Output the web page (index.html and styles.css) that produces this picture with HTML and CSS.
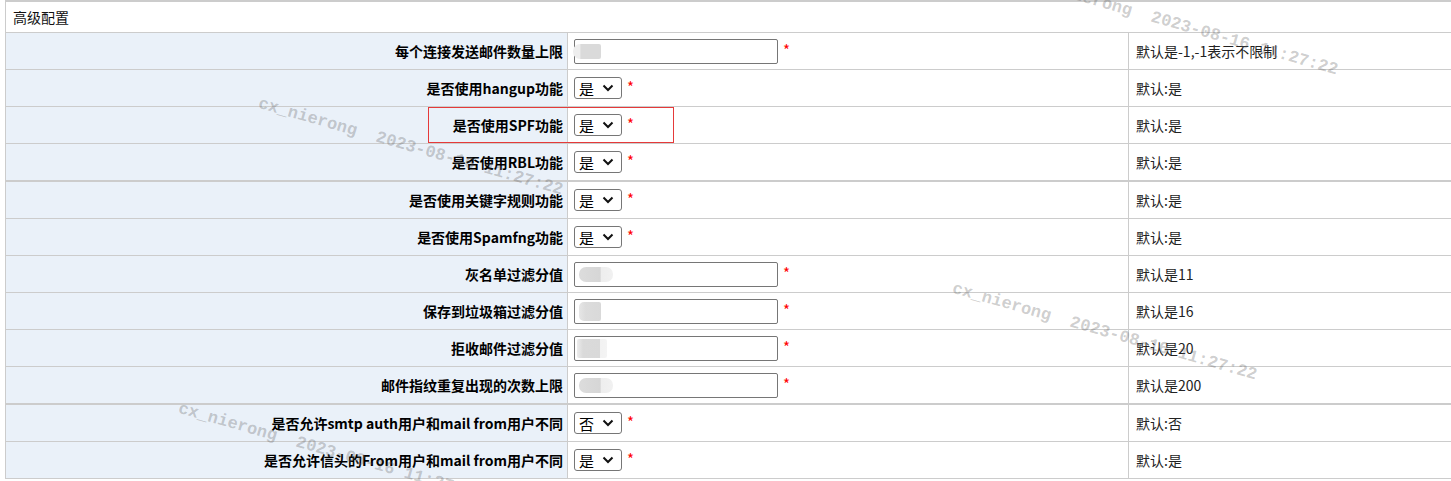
FILE: index.html
```html
<!DOCTYPE html>
<html lang="zh-CN">

<head>
    <meta charset="UTF-8">
    <meta name="viewport" content="width=device-width, initial-scale=1.0">
    <title>高级配置</title>
    <link rel="stylesheet" href="styles.css">
</head>

<body>
    <div class="page">
        <div class="panel">
            <div class="panel-title">高级配置</div>

            <div class="row">
                <div class="cell label">每个连接发送邮件数量上限</div>
                <div class="cell field">
                    <span class="masked"><input type="text" class="text-input"><span class="blur blur-a"></span></span>
                    <span class="req">*</span>
                </div>
                <div class="cell note">默认是-1,-1表示不限制</div>
            </div>

            <div class="row">
                <div class="cell label">是否使用hangup功能</div>
                <div class="cell field">
                    <span class="select-box">
                        <select><option>是</option><option>否</option></select>
                        <svg class="chevron" width="12" height="8" viewBox="0 0 12 8"><path d="M1.5 1.5 L6 6 L10.5 1.5" fill="none" stroke="#111" stroke-width="2"/></svg>
                    </span>
                    <span class="req">*</span>
                </div>
                <div class="cell note">默认:是</div>
            </div>

            <div class="row">
                <div class="cell label">是否使用SPF功能</div>
                <div class="cell field">
                    <span class="select-box">
                        <select><option>是</option><option>否</option></select>
                        <svg class="chevron" width="12" height="8" viewBox="0 0 12 8"><path d="M1.5 1.5 L6 6 L10.5 1.5" fill="none" stroke="#111" stroke-width="2"/></svg>
                    </span>
                    <span class="req">*</span>
                </div>
                <div class="cell note">默认:是</div>
            </div>

            <div class="row">
                <div class="cell label">是否使用RBL功能</div>
                <div class="cell field">
                    <span class="select-box">
                        <select><option>是</option><option>否</option></select>
                        <svg class="chevron" width="12" height="8" viewBox="0 0 12 8"><path d="M1.5 1.5 L6 6 L10.5 1.5" fill="none" stroke="#111" stroke-width="2"/></svg>
                    </span>
                    <span class="req">*</span>
                </div>
                <div class="cell note">默认:是</div>
            </div>

            <div class="row group">
                <div class="cell label">是否使用关键字规则功能</div>
                <div class="cell field">
                    <span class="select-box">
                        <select><option>是</option><option>否</option></select>
                        <svg class="chevron" width="12" height="8" viewBox="0 0 12 8"><path d="M1.5 1.5 L6 6 L10.5 1.5" fill="none" stroke="#111" stroke-width="2"/></svg>
                    </span>
                    <span class="req">*</span>
                </div>
                <div class="cell note">默认:是</div>
            </div>

            <div class="row">
                <div class="cell label">是否使用Spamfng功能</div>
                <div class="cell field">
                    <span class="select-box">
                        <select><option>是</option><option>否</option></select>
                        <svg class="chevron" width="12" height="8" viewBox="0 0 12 8"><path d="M1.5 1.5 L6 6 L10.5 1.5" fill="none" stroke="#111" stroke-width="2"/></svg>
                    </span>
                    <span class="req">*</span>
                </div>
                <div class="cell note">默认:是</div>
            </div>

            <div class="row">
                <div class="cell label">灰名单过滤分值</div>
                <div class="cell field">
                    <span class="masked"><input type="text" class="text-input"><span class="blur blur-b"></span></span>
                    <span class="req">*</span>
                </div>
                <div class="cell note">默认是11</div>
            </div>

            <div class="row">
                <div class="cell label">保存到垃圾箱过滤分值</div>
                <div class="cell field">
                    <span class="masked"><input type="text" class="text-input"><span class="blur blur-c"></span></span>
                    <span class="req">*</span>
                </div>
                <div class="cell note">默认是16</div>
            </div>

            <div class="row">
                <div class="cell label">拒收邮件过滤分值</div>
                <div class="cell field">
                    <span class="masked"><input type="text" class="text-input"><span class="blur blur-d"></span></span>
                    <span class="req">*</span>
                </div>
                <div class="cell note">默认是20</div>
            </div>

            <div class="row">
                <div class="cell label">邮件指纹重复出现的次数上限</div>
                <div class="cell field">
                    <span class="masked"><input type="text" class="text-input"><span class="blur blur-b"></span></span>
                    <span class="req">*</span>
                </div>
                <div class="cell note">默认是200</div>
            </div>

            <div class="row group">
                <div class="cell label">是否允许smtp auth用户和mail from用户不同</div>
                <div class="cell field">
                    <span class="select-box">
                        <select><option>否</option><option>是</option></select>
                        <svg class="chevron" width="12" height="8" viewBox="0 0 12 8"><path d="M1.5 1.5 L6 6 L10.5 1.5" fill="none" stroke="#111" stroke-width="2"/></svg>
                    </span>
                    <span class="req">*</span>
                </div>
                <div class="cell note">默认:否</div>
            </div>

            <div class="row">
                <div class="cell label">是否允许信头的From用户和mail from用户不同</div>
                <div class="cell field">
                    <span class="select-box">
                        <select><option>是</option><option>否</option></select>
                        <svg class="chevron" width="12" height="8" viewBox="0 0 12 8"><path d="M1.5 1.5 L6 6 L10.5 1.5" fill="none" stroke="#111" stroke-width="2"/></svg>
                    </span>
                    <span class="req">*</span>
                </div>
                <div class="cell note">默认:是</div>
            </div>
        </div>

        <!-- annotation box drawn over the SPF row -->
        <div class="highlight"></div>

        <!-- watermark layer -->
        <div class="watermarks">
            <span class="wm wm-1">cx_nierong  2023-08-16 11:27:22</span>
            <span class="wm wm-2">cx_nierong  2023-08-16 11:27:22</span>
            <span class="wm wm-3">cx_nierong  2023-08-16 11:27:22</span>
            <span class="wm wm-4">cx_nierong  2023-08-16 11:27:22</span>
        </div>
    </div>
</body>

</html>
```

FILE: styles.css
```css
body {
    margin: 0;
    padding: 0;
    background-color: #fff;
    font-family: "Noto Sans CJK SC", "Liberation Sans", sans-serif;
    font-size: 14px;
    color: #111;
    overflow: hidden;
}

.page {
    position: relative;
    padding-left: 5px;
    height: 481px;
}

.panel-title {
    box-sizing: border-box;
    height: 33px;
    display: flex;
    align-items: center;
    padding-left: 7px;
    border-top: 2px solid #ccc;
    border-bottom: 1px solid #ccc;
    border-left: 1px solid #ccc;
    background-color: #fff;
}

.row {
    display: grid;
    grid-template-columns: 563px 560px 1fr;
}

.cell {
    box-sizing: border-box;
    height: 37px;
    display: flex;
    align-items: center;
    border-bottom: 1px solid #ccc;
}

.row.group .cell {
    height: 38px;
    border-top: 1px solid #ccc;
}

.label {
    justify-content: flex-end;
    padding-right: 4px;
    background-color: #eaf1f9;
    border-left: 1px solid #ccc;
    border-right: 1px solid #ccc;
    font-weight: bold;
    color: #000;
    white-space: nowrap;
}

.field {
    padding-left: 6px;
}

.note {
    padding-left: 7px;
    border-left: 1px solid #ccc;
    color: #222;
}

.masked {
    display: grid;
}

.text-input {
    grid-area: 1 / 1;
    box-sizing: border-box;
    width: 204px;
    height: 25px;
    margin: 0;
    border: 1px solid #767676;
    border-radius: 2px;
    background-color: #fff;
}

.blur {
    grid-area: 1 / 1;
    align-self: center;
    justify-self: start;
    height: 15px;
    border-radius: 7px 2px 2px 7px;
    filter: blur(0.6px);
}

.blur-a {
    width: 28px;
    margin-left: -1px;
    background: linear-gradient(to right, #eeeeee 0%, #eeeeee 25%, #dadada 28%, #dadada 100%);
}

.blur-b {
    width: 34px;
    margin-left: 5px;
    border-radius: 7px;
    background: linear-gradient(to right, #dcdcdc 0%, #d6d6d6 62%, #eeeeee 66%, #f1f1f1 100%);
}

.blur-c {
    width: 22px;
    height: 19px;
    margin-left: 5px;
    border-radius: 5px 2px 2px 5px;
    background: linear-gradient(to right, #e6e6e6 0%, #dcdcdc 30%, #d9d9d9 100%);
}

.blur-d {
    width: 30px;
    height: 19px;
    margin-left: 3px;
    border-radius: 2px;
    background: linear-gradient(to right, #ececec 0%, #dadada 20%, #d9d9d9 75%, #f2f2f2 78%, #f4f4f4 100%);
}

.req {
    margin-left: 5px;
    margin-bottom: 4px;
    color: #f00;
    font-size: 15px;
}

.select-box {
    display: grid;
}

.select-box select {
    grid-area: 1 / 1;
    appearance: none;
    -webkit-appearance: none;
    box-sizing: border-box;
    width: 48px;
    height: 22px;
    margin: 0;
    padding: 0 0 0 4px;
    border: 1px solid #767676;
    border-radius: 3px;
    background-color: #fff;
    font-family: "Noto Sans CJK SC", sans-serif;
    font-size: 15px;
    color: #000;
}

.chevron {
    grid-area: 1 / 1;
    align-self: center;
    justify-self: end;
    margin-right: 8px;
    pointer-events: none;
}

.highlight {
    position: absolute;
    left: 428px;
    top: 107px;
    width: 246px;
    height: 36px;
    box-sizing: border-box;
    border: 1px solid #e53a3a;
    pointer-events: none;
}

.watermarks {
    position: absolute;
    inset: 0;
    overflow: hidden;
    pointer-events: none;
}

.wm {
    position: absolute;
    white-space: pre;
    font-family: "Liberation Mono", monospace;
    font-weight: bold;
    font-size: 17px;
    line-height: 17px;
    color: rgba(90, 90, 90, 0.3);
    transform-origin: 0 0;
    transform: rotate(16deg);
}

.wm-1 { left: 1036px; top: -25px; }
.wm-2 { left: 261px; top: 95px; }
.wm-3 { left: 955px; top: 280px; }
.wm-4 { left: 181px; top: 400px; }
```
